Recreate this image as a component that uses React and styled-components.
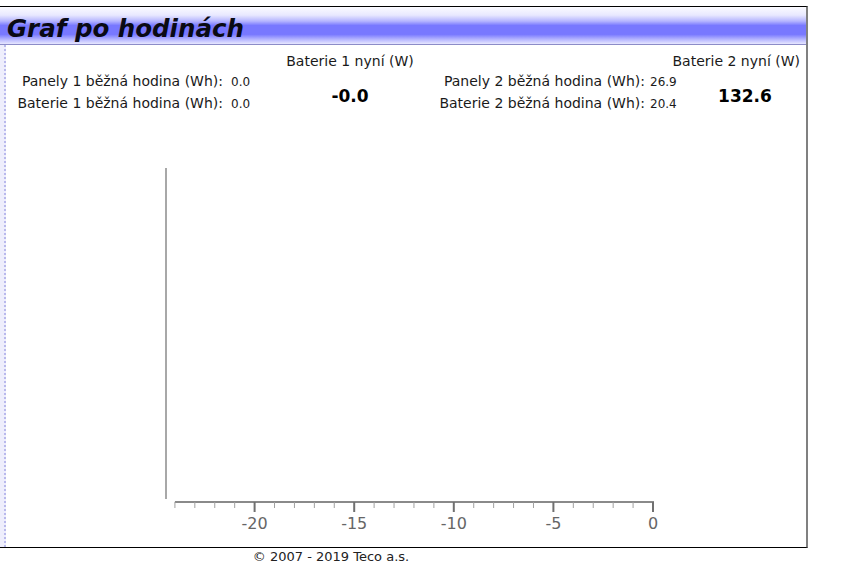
import React from 'react';
import styled, { createGlobalStyle } from 'styled-components';

const GlobalStyle = createGlobalStyle`
  body {
    margin: 0;
    background: #fff;
    font-family: "DejaVu Sans", Verdana, sans-serif;
    color: #111;
  }
`;

const Page = styled.div`
  padding-top: 6px;
`;

const Panel = styled.div`
  width: 808px;
  box-sizing: border-box;
  border-top: 1px solid #000;
  border-right: 2px solid #808080;
  border-bottom: 1px solid #000;
`;

const Header = styled.div`
  height: 37px;
  border-bottom: 1px solid #8c8cc8;
  background: linear-gradient(
    to bottom,
    #fbfbff 0%,
    #e8e8ff 22%,
    #b6b6ff 38%,
    #7878ff 50%,
    #7878ff 74%,
    #b8b8ff 88%,
    #e6e6ff 100%
  );
  display: flex;
  align-items: center;
  padding-left: 7px;
`;

const Title = styled.h1`
  margin: 0;
  font-size: 24.5px;
  font-weight: bold;
  font-style: italic;
  color: #0a0a14;
  padding-top: 6px;
`;

const Body = styled.div`
  display: flex;
  height: 502px;
`;

const Stripe = styled.div`
  width: 4px;
  background: #eeeefc;
  border-right: 2px dotted #b9b9ec;
  margin-right: 1px;
`;

const Content = styled.div`
  flex: 1;
  display: flex;
  flex-direction: column;
`;

const InfoGrid = styled.div`
  display: grid;
  grid-template-columns: 216px 35px 184px 203px 45px 110px;
  grid-template-rows: 18px 22px 22px;
  padding-top: 7px;
  font-size: 14px;
  white-space: nowrap;
`;

const Label = styled.div`
  grid-column: ${(p) => p.col};
  grid-row: ${(p) => p.row};
  justify-self: end;
  align-self: center;
  color: #1a1a1a;
`;

const Value = styled.div`
  grid-column: ${(p) => p.col};
  grid-row: ${(p) => p.row};
  align-self: center;
  padding-left: ${(p) => p.pad}px;
  font-size: 12px;
  padding-top: 2px;
  color: #1a1a1a;
`;

const NowHead = styled.div`
  grid-column: ${(p) => p.col};
  grid-row: 1;
  justify-self: ${(p) => p.align};
  align-self: center;
  color: #1a1a1a;
`;

const NowValue = styled.div`
  grid-column: ${(p) => p.col};
  grid-row: 2 / span 2;
  justify-self: center;
  align-self: center;
  padding-top: 8px;
  font-size: 17px;
  font-weight: bold;
  color: #000;
`;

const Chart = styled.svg`
  display: block;
`;

const Footer = styled.div`
  width: 662px;
  text-align: center;
  font-size: 13px;
  line-height: 18px;
  color: #222;
`;

const X0 = 7;
const zeroX = 653;
const step = 19.92;

const AxisChart = () => {
  const ticks = [];
  for (let h = -24; h <= 0; h++) {
    const x = zeroX + h * step - X0;
    const major = h % 5 === 0;
    ticks.push(
      <line
        key={h}
        x1={x}
        x2={x}
        y1={388}
        y2={major ? 398 : 394}
        stroke={major ? '#707070' : '#a0a0a0'}
        strokeWidth={major ? 2 : 1}
      />
    );
    if (major) {
      ticks.push(
        <text key={'l' + h} x={x} y={415} textAnchor="middle" fontSize="16" fill="#666" fontFamily="DejaVu Sans, sans-serif">
          {h}
        </text>
      );
    }
  }
  return (
    <Chart width="799" height="432" viewBox="0 0 799 432">
      <line x1={159} x2={159} y1={54} y2={385} stroke="#a8a8a8" strokeWidth="2" />
      <line x1={zeroX - 24 * step - X0} x2={zeroX - X0 + 1} y1={388} y2={388} stroke="#8a8a8a" strokeWidth="2" />
      {ticks}
    </Chart>
  );
};

const App = () => {
  return (
    <Page>
      <GlobalStyle />
      <Panel>
        <Header>
          <Title>Graf po hodinách</Title>
        </Header>
        <Body>
          <Stripe />
          <Content>
            <InfoGrid>
              <NowHead col="3" align="center">Baterie 1 nyní (W)</NowHead>
              <NowHead col="4 / span 3" align="end">Baterie 2 nyní (W)</NowHead>

              <Label col="1" row="2">Panely 1 běžná hodina (Wh):</Label>
              <Value col="2" row="2" pad={8}>0.0</Value>
              <Label col="1" row="3">Baterie 1 běžná hodina (Wh):</Label>
              <Value col="2" row="3" pad={8}>0.0</Value>
              <NowValue col="3">-0.0</NowValue>

              <Label col="4" row="2">Panely 2 běžná hodina (Wh):</Label>
              <Value col="5" row="2" pad={5}>26.9</Value>
              <Label col="4" row="3">Baterie 2 běžná hodina (Wh):</Label>
              <Value col="5" row="3" pad={5}>20.4</Value>
              <NowValue col="6">132.6</NowValue>
            </InfoGrid>
            <AxisChart />
          </Content>
        </Body>
      </Panel>
      <Footer>© 2007 - 2019 Teco a.s.</Footer>
    </Page>
  );
};

export default App;
